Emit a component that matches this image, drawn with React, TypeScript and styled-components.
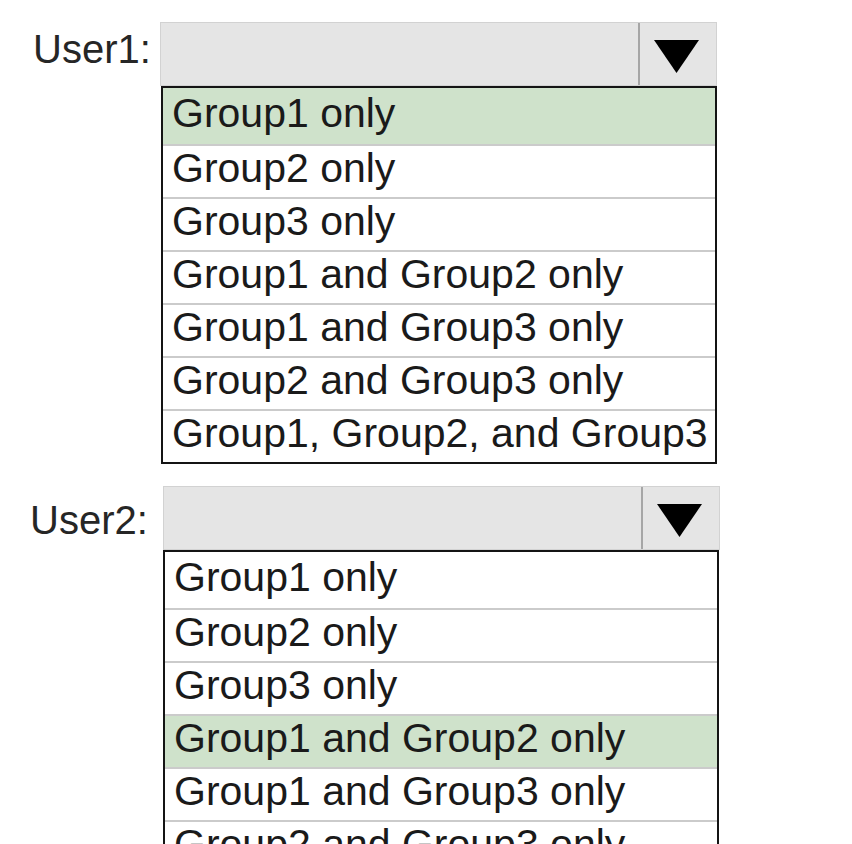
import React from "react";
import styled, { createGlobalStyle } from "styled-components";

const GlobalStyle = createGlobalStyle`
  html, body {
    margin: 0;
    padding: 0;
    background: #ffffff;
  }
  body {
    font-family: "Liberation Sans", Arial, sans-serif;
    color: #111111;
  }
`;

const Page = styled.div`
  display: flex;
  flex-direction: column;
  gap: 22px;
  padding-top: 22px;
  width: 852px;
  height: 844px;
  overflow: hidden;
  box-sizing: border-box;
`;

const Block = styled.div<{ $indent: number }>`
  display: grid;
  grid-template-columns: ${(p) => p.$indent}px 557px;
  grid-template-rows: auto auto;
`;

const Label = styled.div<{ $left: number; $top: number }>`
  grid-column: 1;
  grid-row: 1;
  padding-left: ${(p) => p.$left}px;
  padding-top: ${(p) => p.$top}px;
  font-size: 40px;
  line-height: 40px;
  color: #262626;
  white-space: nowrap;
`;

const Combo = styled.div`
  grid-column: 2;
  grid-row: 1;
  display: flex;
  height: 64px;
  box-sizing: border-box;
  border: 1px solid #d2d2d2;
  background: #e5e5e5;
`;

const Field = styled.div`
  flex: 1;
`;

const ArrowBox = styled.div`
  width: 78px;
  display: flex;
  align-items: center;
  justify-content: center;
  padding: 5px 3px 0 0;
  box-sizing: border-box;
  border-left: 2px solid #a6a6a6;
`;

const List = styled.div<{ $shift: number }>`
  grid-column: 2;
  grid-row: 2;
  margin-left: ${(p) => p.$shift}px;
  width: 556px;
  box-sizing: border-box;
  border: 2px solid #141414;
  display: flex;
  flex-direction: column;
`;

const Option = styled.div<{ $selected: boolean; $first: boolean }>`
  box-sizing: border-box;
  height: ${(p) => (p.$first ? 56 : 53)}px;
  padding: ${(p) => (p.$first ? 5 : 2)}px 0 0 9px;
  border-top: ${(p) => (p.$first ? "none" : "2px solid #cbcbcb")};
  background: ${(p) => (p.$selected ? "#cfe2cb" : "#ffffff")};
  font-size: 41px;
  line-height: 40px;
  color: #1a1a1a;
  white-space: nowrap;
`;

const options = [
  "Group1 only",
  "Group2 only",
  "Group3 only",
  "Group1 and Group2 only",
  "Group1 and Group3 only",
  "Group2 and Group3 only",
  "Group1, Group2, and Group3",
];

const Arrow = () => (
  <svg width="45" height="33" viewBox="0 0 45 33">
    <polygon points="0,0 45,0 22.5,33" fill="#000000" />
  </svg>
);

type DropProps = {
  user: string;
  indent: number;
  labelLeft: number;
  labelTop: number;
  listShift: number;
  selected: number;
};

const Dropdown = ({ user, indent, labelLeft, labelTop, listShift, selected }: DropProps) => (
  <Block $indent={indent}>
    <Label $left={labelLeft} $top={labelTop}>
      {user}:
    </Label>
    <Combo>
      <Field />
      <ArrowBox>
        <Arrow />
      </ArrowBox>
    </Combo>
    <List $shift={listShift}>
      {options.map((o, i) => (
        <Option key={o} $selected={i === selected} $first={i === 0}>
          {o}
        </Option>
      ))}
    </List>
  </Block>
);

export default function App() {
  return (
    <>
      <GlobalStyle />
      <Page>
        <Dropdown user="User1" indent={160} labelLeft={33} labelTop={7} listShift={1} selected={0} />
        <Dropdown user="User2" indent={163} labelLeft={30} labelTop={14} listShift={0} selected={3} />
      </Page>
    </>
  );
}
